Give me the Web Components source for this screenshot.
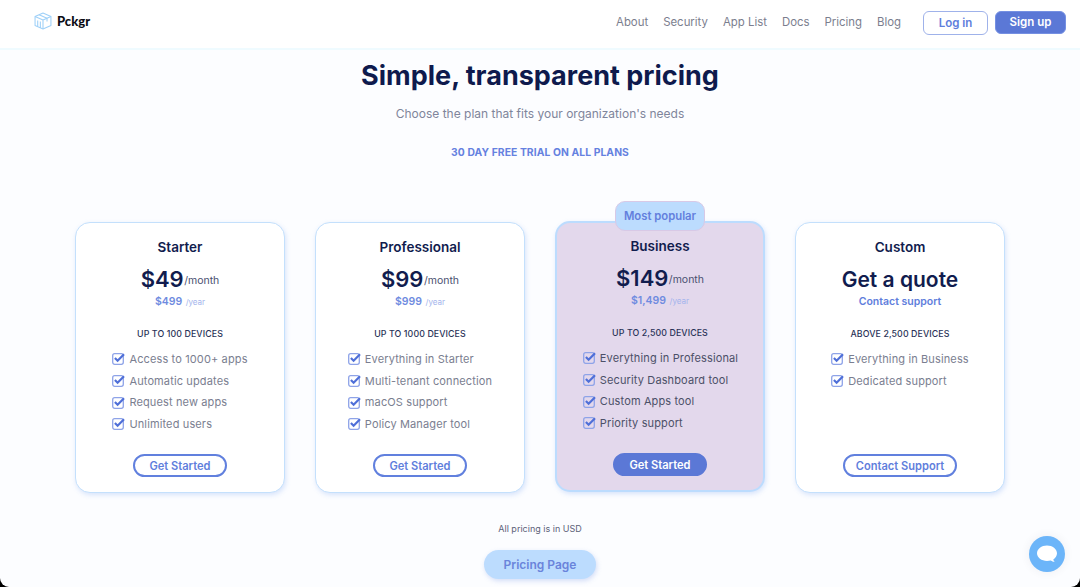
<!DOCTYPE html>
<html>
<head>
<meta charset="utf-8">
<title>Pckgr pricing</title>
<style>
  html, body { margin: 0; height: 587px; background: #000; overflow: hidden; }
  body { font-family: Inter, "Liberation Sans", sans-serif; }
</style>
</head>
<body>
<pk-page>
  <pk-header></pk-header>
  <pk-hero></pk-hero>
  <pk-plans>
    <pk-plan name="Starter" price="$49" yearly="$499" devices="UP TO 100 DEVICES" cta="Get Started">
      <pk-feature>Access to 1000+ apps</pk-feature>
      <pk-feature>Automatic updates</pk-feature>
      <pk-feature>Request new apps</pk-feature>
      <pk-feature>Unlimited users</pk-feature>
    </pk-plan>
    <pk-plan name="Professional" price="$99" yearly="$999" devices="UP TO 1000 DEVICES" cta="Get Started">
      <pk-feature>Everything in Starter</pk-feature>
      <pk-feature>Multi-tenant connection</pk-feature>
      <pk-feature>macOS support</pk-feature>
      <pk-feature>Policy Manager tool</pk-feature>
    </pk-plan>
    <pk-plan popular name="Business" price="$149" yearly="$1,499" devices="UP TO 2,500 DEVICES" cta="Get Started">
      <pk-feature dark>Everything in Professional</pk-feature>
      <pk-feature dark>Security Dashboard tool</pk-feature>
      <pk-feature dark>Custom Apps tool</pk-feature>
      <pk-feature dark>Priority support</pk-feature>
    </pk-plan>
    <pk-plan quote name="Custom" price="Get a quote" yearly="Contact support" devices="ABOVE 2,500 DEVICES" cta="Contact Support">
      <pk-feature>Everything in Business</pk-feature>
      <pk-feature>Dedicated support</pk-feature>
    </pk-plan>
  </pk-plans>
  <pk-footer></pk-footer>
  <pk-chat></pk-chat>
</pk-page>

<script>
const define = (name, html) => {
  customElements.define(name, class extends HTMLElement {
    constructor() {
      super();
      this.shadow = this.attachShadow({ mode: "open" });
    }
    connectedCallback() {
      this.shadow.innerHTML = typeof html === "function" ? html(this) : html;
    }
  });
};

define("pk-page", `
  <style>
    :host {
      display: block;
      position: relative;
      height: 587px;
      overflow: hidden;
      background: #fcfdff;
      border-radius: 0 0 9px 9px;
      color: #111c4e;
    }
  </style>
  <slot></slot>`);

define("pk-header", `
  <style>
    :host {
      display: flex;
      align-items: center;
      box-sizing: border-box;
      height: 50px;
      padding: 0 14px 4px 34px;
      background: #fff;
      border-bottom: 2px solid #effbff;
    }
    .logo { display: flex; align-items: center; gap: 5px; margin-bottom: 2px; font: 900 13px Lato, sans-serif; color: #0c0c14; }
    nav { margin-left: auto; display: flex; gap: 15px; font-size: 11.400px; color: #7b7e8e; }
    .btn { box-sizing: border-box; font-size: 11.500px; font-weight: 600; display: flex; align-items: center; justify-content: center; border-radius: 6px; }
    .login { width: 65px; height: 24px; margin-left: 22px; margin-top: 1px; color: #5f7edc; background: #fff; border: 1px solid #9fb2ea; }
    .signup { width: 71px; height: 23px; margin-left: 7px; color: #fff; background: #5b78d6; border: 1px solid #7590e2; }
  </style>
  <div class="logo">
    <svg width="18" height="18" viewBox="0 0 17 17" fill="none" stroke="#9ed0f8" stroke-width="1" stroke-linejoin="round">
      <path d="M8.500 1 16 4.200v8.600L8.500 16 1 12.800V4.200Z"/>
      <path d="M1 4.200 8.500 7.500 16 4.200M8.500 7.500V16"/>
      <path d="M4.800 2.600 12.300 5.900V9M3.500 8v5.500M6 9v6"/>
    </svg>
    <span>Pckgr</span>
  </div>
  <nav>
    <span>About</span><span>Security</span><span>App List</span><span>Docs</span><span>Pricing</span><span>Blog</span>
  </nav>
  <div class="btn login">Log in</div>
  <div class="btn signup">Sign up</div>`);

define("pk-hero", `
  <style>
    :host { display: block; text-align: center; }
    h1 { margin: 8px 0 0; font-size: 27px; line-height: 36px; font-weight: 700; color: #0e1a4d; }
    p { margin: 11px 0 0; font-size: 12px; line-height: 18px; color: #7f859b; }
    .trial { margin-top: 21px; font-size: 10.300px; line-height: 16px; font-weight: 700; color: #6581e0; letter-spacing: 0.1px; }
  </style>
  <h1>Simple, transparent pricing</h1>
  <p>Choose the plan that fits your organization's needs</p>
  <p class="trial">30 DAY FREE TRIAL ON ALL PLANS</p>`);

define("pk-plans", `
  <style>
    :host { display: flex; justify-content: center; align-items: flex-start; gap: 30px; margin-top: 62px; }
  </style>
  <slot></slot>`);

define("pk-plan", (el) => {
  const quote = el.hasAttribute("quote");
  const popular = el.hasAttribute("popular");
  const price = quote
    ? `<div class="quote">${el.getAttribute("price")}</div><div class="contact">${el.getAttribute("yearly")}</div>`
    : `<div class="price"><b>${el.getAttribute("price")}</b> <span>/month</span></div>
       <div class="year"><b>${el.getAttribute("yearly")}</b> <span>/year</span></div>`;
  return `
  <style>
    :host {
      display: flex;
      flex-direction: column;
      align-items: center;
      position: relative;
      box-sizing: border-box;
      width: 210px;
      height: 271px;
      padding: 15px 0 15px;
      background: #fff;
      border: 1px solid #c4e0fc;
      border-radius: 15px;
      box-shadow: 1px 2px 5px rgba(120, 160, 240, 0.28);
      text-align: center;
    }
    :host([popular]) {
      margin-top: -1px;
      background: #e3d8ec;
      border: 2px solid #bcdcfe;
      padding: 14px 0;
    }
    :host([popular]) .features { margin-left: 1px; }
    .badge {
      position: absolute;
      top: -22px;
      left: 58px;
      box-sizing: border-box;
      width: 90px;
      height: 30px;
      display: flex;
      align-items: center;
      justify-content: center;
      background: #bcdcfe;
      border: 1px solid #d8c9e6;
      border-radius: 10px;
      font-size: 11.300px;
      font-weight: 600;
      color: #637fdd;
    }
    .name { font-size: 13.500px; line-height: 18px; font-weight: 600; color: #111c4e; }
    .price { margin-top: 8px; line-height: 30px; height: 30px; white-space: nowrap; }
    .price b { font-size: 22px; font-weight: 600; color: #111c4e; }
    .price span { font-size: 10.500px; color: #4a5070; margin-left: -4px; vertical-align: 3px; }
    .year { height: 14px; line-height: 14px; margin-top: -2px; white-space: nowrap; }
    .year b { font-size: 10.500px; font-weight: 600; color: #6f8be0; }
    .year span { font-size: 8px; color: #a4b4ec; margin-left: -1px; }
    .quote { margin-top: 9px; line-height: 30px; height: 30px; font-size: 21px; font-weight: 600; color: #111c4e; white-space: nowrap; }
    .contact { height: 14px; line-height: 14px; margin-bottom: -3px; font-size: 10.500px; font-weight: 600; color: #5f7edc; }
    .devices { margin-top: 21px; font-size: 8.800px; line-height: 14px; font-weight: 500; color: #2a3358; letter-spacing: 0.1px; }
    .features { margin-top: 7px; width: fit-content; display: flex; flex-direction: column; align-items: flex-start; }
    .cta {
      margin-top: auto;
      box-sizing: border-box;
      height: 23px;
      padding: 0 11px;
      min-width: 94px;
      display: flex;
      align-items: center;
      justify-content: center;
      border: 2px solid #6180de;
      border-radius: 12px;
      background: #fff;
      color: #5f7edc;
      font-size: 11.100px;
      font-weight: 600;
    }
    :host([popular]) .cta { background: #5b78d6; border-color: #5b78d6; color: #fff; }
  </style>
  ${popular ? '<div class="badge">Most popular</div>' : ""}
  <div class="name">${el.getAttribute("name")}</div>
  ${price}
  <div class="devices">${el.getAttribute("devices")}</div>
  <div class="features"><slot></slot></div>
  <div class="cta">${el.getAttribute("cta")}</div>`;
});

define("pk-feature", `
  <style>
    :host { display: flex; align-items: center; gap: 4px; height: 21.700px; font-size: 11px; color: #7a7e90; letter-spacing: 0.13px; white-space: nowrap; }
    :host([dark]) { color: #4c5068; }
    svg { flex: none; }
  </style>
  <svg width="13" height="13" viewBox="0 0 13 13" fill="none">
    <rect x="0.700" y="1.700" width="10.600" height="10.600" rx="2" stroke="#8ea3e8" stroke-width="1.300"/>
    <path d="M2.900 6 5.600 8.700 12 2.200" stroke="#4f6fd8" stroke-width="2.200"/>
  </svg>
  <span><slot></slot></span>`);

define("pk-footer", `
  <style>
    :host { display: block; text-align: center; margin-top: 29px; }
    .note { font-size: 9px; line-height: 14px; color: #5d6279; }
    .btn {
      box-sizing: border-box;
      width: 112px;
      height: 29px;
      margin: 14px auto 0;
      display: flex;
      align-items: center;
      justify-content: center;
      background: #bcdcfe;
      border-radius: 15px;
      box-shadow: 1px 2px 5px rgba(120, 150, 230, 0.3);
      color: #6a84db;
      font-size: 12px;
      font-weight: 600;
    }
  </style>
  <div class="note">All pricing is in USD</div>
  <div class="btn">Pricing Page</div>`);

define("pk-chat", `
  <style>
    :host {
      position: absolute;
      left: 1029px;
      top: 536px;
      width: 36px;
      height: 36px;
      display: flex;
      align-items: center;
      justify-content: center;
      border-radius: 50%;
      background: #6cb5f9;
      box-shadow: 0 0 10px rgba(60, 60, 90, 0.08);
    }
  </style>
  <svg width="22" height="20" viewBox="0 0 22 20">
    <path fill="#fff" d="M11 1.500c5.500 0 10 3.400 10 7.800 0 2.600-1.500 4.700-3.700 6.100.2 1 .8 1.900 1.500 2.500-1.400 0-3-.5-4-1.300-1.200.3-2.400.4-3.800.4C5.500 17 1 13.700 1 9.300S5.500 1.500 11 1.500Z"/>
  </svg>`);
</script>
</body>
</html>
